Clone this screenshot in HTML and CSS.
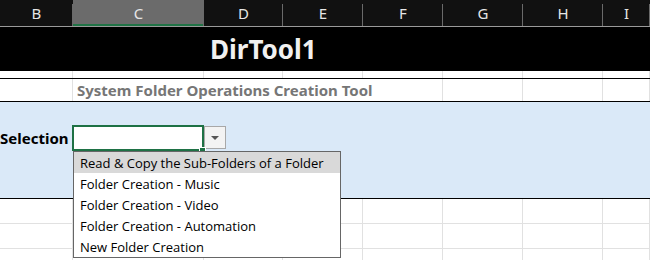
FILE: index.html
```html
<!DOCTYPE html>
<html lang="en">
<head>
    <meta charset="UTF-8">
    <title>DirTool1</title>
    <link rel="stylesheet" href="styles.css">
</head>
<body>
    <div class="sheet">
        <div class="row col-head">
            <div class="hcell">B</div>
            <div class="hcell selected">C</div>
            <div class="hcell">D</div>
            <div class="hcell">E</div>
            <div class="hcell">F</div>
            <div class="hcell">G</div>
            <div class="hcell">H</div>
            <div class="hcell">I</div>
        </div>

        <div class="title-row">DirTool1</div>

        <div class="row spacer">
            <div class="cell"></div><div class="cell"></div><div class="cell"></div><div class="cell"></div>
            <div class="cell"></div><div class="cell"></div><div class="cell"></div><div class="cell"></div>
        </div>

        <div class="row subtitle-row">
            <div class="cell"></div>
            <div class="cell subtitle">System Folder Operations Creation Tool</div>
            <div class="cell"></div><div class="cell"></div><div class="cell"></div>
        </div>

        <div class="row band">
            <div class="label">Selection</div>
            <div class="picker">
                <div class="input-box"><span class="handle"></span></div>
                <div class="drop-btn"><span class="arrow"></span></div>
                <ul class="drop-list">
                    <li class="active">Read &amp; Copy the Sub-Folders of a Folder</li>
                    <li>Folder Creation - Music</li>
                    <li>Folder Creation - Video</li>
                    <li>Folder Creation - Automation</li>
                    <li>New Folder Creation</li>
                </ul>
            </div>
        </div>

        <div class="row grid-row">
            <div class="cell"></div><div class="cell"></div><div class="cell"></div><div class="cell"></div>
            <div class="cell"></div><div class="cell"></div><div class="cell"></div><div class="cell"></div>
        </div>
        <div class="row grid-row">
            <div class="cell"></div><div class="cell"></div><div class="cell"></div><div class="cell"></div>
            <div class="cell"></div><div class="cell"></div><div class="cell"></div><div class="cell"></div>
        </div>
        <div class="row grid-row">
            <div class="cell"></div><div class="cell"></div><div class="cell"></div><div class="cell"></div>
            <div class="cell"></div><div class="cell"></div><div class="cell"></div><div class="cell"></div>
        </div>
    </div>
</body>
</html>
```

FILE: styles.css
```css
body {
    margin: 0;
    background-color: #fff;
    font-family: "Noto Sans", "Open Sans", sans-serif;
    overflow: hidden;
}
.sheet {
    width: 650px;
    height: 260px;
    overflow: hidden;
}
.row {
    display: grid;
    grid-template-columns: 73px 131px 79px 80px 80px 80px 80px 47px;
}
.cell {
    border-right: 1px solid #e1e1e1;
}

/* column letters */
.col-head {
    height: 26px;
    background-color: #111;
    border-bottom: 1px solid #9a9a9a;
}
.hcell {
    position: relative;
    color: #e6e6e6;
    font-size: 15px;
    line-height: 26px;
    text-align: center;
}
.hcell::after {
    content: "";
    position: absolute;
    right: 0;
    top: 4px;
    bottom: 0;
    width: 1px;
    background-color: #6a6a6a;
}
.hcell.selected {
    background-color: #6b6b6b;
    box-shadow: inset 0 -2px 0 #217346;
}

.title-row {
    height: 44px;
    background-color: #000;
    color: #f0f0f0;
    font-size: 26px;
    font-weight: bold;
    line-height: 44px;
    padding-left: 210px;
}

.spacer {
    height: 7px;
    border-bottom: 1px solid #000;
}

/* title text overflows C..E, so the merged cell spans to F */
.subtitle-row {
    height: 22px;
    border-bottom: 1px solid #000;
    grid-template-columns: 73px 370px 80px 80px 47px;
}
.subtitle {
    color: #767676;
    font-size: 15px;
    font-weight: bold;
    line-height: 22px;
    padding-left: 4px;
    white-space: nowrap;
}

.band {
    box-sizing: border-box;
    height: 97px;
    padding-top: 23px;
    background-color: #dae9f8;
    border-bottom: 1px solid #000;
    display: flex;
    align-items: flex-start;
}
.label {
    width: 72px;
    font-size: 15px;
    font-weight: bold;
    line-height: 26px;
    color: #000;
}
.picker {
    position: relative;
    display: flex;
    align-items: flex-start;
}
.input-box {
    position: relative;
    width: 128px;
    height: 22px;
    background-color: #fff;
    border: 2px solid #1e7145;
}
.handle {
    position: absolute;
    right: -4px;
    bottom: -5px;
    width: 5px;
    height: 5px;
    background-color: #1e7145;
    border: 1px solid #fff;
}
.drop-btn {
    width: 20px;
    height: 21px;
    margin-top: 1px;
    background-color: #f3f3f3;
    border: 1px solid #a8a8a8;
    display: flex;
    justify-content: center;
    align-items: center;
}
.arrow {
    width: 0;
    height: 0;
    border-left: 4px solid transparent;
    border-right: 4px solid transparent;
    border-top: 4px solid #555;
}
.drop-list {
    position: absolute;
    left: 1px;
    top: 26px;
    width: 266px;
    margin: 0;
    padding: 0;
    list-style: none;
    background-color: #fff;
    border: 1px solid #666;
    z-index: 2;
}
.drop-list li {
    height: 21px;
    line-height: 23px;
    padding-left: 6px;
    font-family: "Open Sans", "Noto Sans", sans-serif;
    font-size: 13px;
    color: #000;
    white-space: nowrap;
}
.drop-list li.active {
    background-color: #d9d9d9;
}

.grid-row {
    height: 24px;
    border-bottom: 1px solid #e1e1e1;
}
```
